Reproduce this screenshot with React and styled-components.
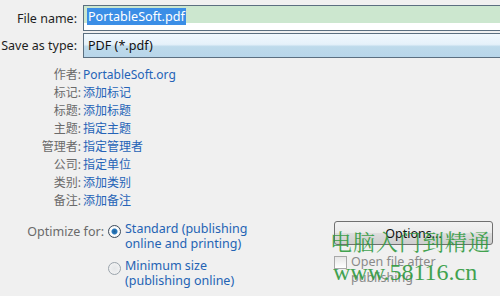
import React from "react";
import styled, { createGlobalStyle } from "styled-components";

const GlobalStyle = createGlobalStyle`
  html, body {
    margin: 0;
    padding: 0;
    background: #f0f0f0;
    overflow: hidden;
  }
  body {
    font-family: "Noto Sans", "Noto Sans CJK SC", sans-serif;
    font-size: 12px;
  }
`;

const Page = styled.div`
  position: relative;
  width: 500px;
  height: 296px;
  background: #f0f0f0;
  overflow: hidden;
`;

const FieldRow = styled.div`
  display: grid;
  grid-template-columns: 80px 1fr;
  align-items: center;
  height: 26px;
  margin-top: ${(p) => p.$top}px;
`;

const FieldLabel = styled.label`
  text-align: right;
  padding-right: 3px;
  color: #1e1e1e;
  font-size: 12.5px;
`;

const NameBox = styled.div`
  height: 22px;
  margin-left: 3px;
  border: 1px solid #5b6f80;
  border-right: none;
  background: linear-gradient(#cce7cf 0, #cce7cf 17px, #ffffff 17px);
  display: flex;
  align-items: flex-start;
  padding: 2px 0 0 3px;
`;

const Selected = styled.span`
  background: #3b8ee6;
  color: #ffffff;
  font-size: 12.6px;
  line-height: 17px;
  padding: 0 1px;
`;

const TypeBox = styled.div`
  height: 23px;
  margin-left: 3px;
  border: 1px solid #5b6f80;
  border-right: none;
  background: linear-gradient(#f1f8fd 0%, #e5f1fa 45%, #bedaeb 55%, #b8d6ea 100%);
  display: flex;
  align-items: center;
  padding-left: 4px;
  font-size: 12.6px;
  color: #111;
`;

const Meta = styled.div`
  display: flex;
  flex-direction: column;
  margin-top: 7px;
`;

const MetaRow = styled.div`
  display: grid;
  grid-template-columns: 83px auto;
  height: 18px;
  align-items: center;
`;

const MetaKey = styled.span`
  text-align: right;
  color: #6a6a6a;
  padding-right: 2px;
`;

const MetaValue = styled.span`
  color: #2563b7;
`;

const Bottom = styled.div`
  display: flex;
  margin-top: 12px;
`;

const OptimizeLabel = styled.div`
  width: 104px;
  text-align: right;
  color: #6a6a6a;
  padding-top: 2px;
  font-size: 12.5px;
`;

const RadioGroup = styled.div`
  display: flex;
  flex-direction: column;
  gap: 7px;
  margin-left: 4px;
  width: 216px;
`;

const RadioItem = styled.div`
  display: flex;
  align-items: flex-start;
  gap: 4px;
`;

const RadioDot = styled.span`
  flex: none;
  width: 11px;
  height: 11px;
  margin-top: 4px;
  border-radius: 50%;
  border: 1px solid ${(p) => (p.$on ? "#3c4a5a" : "#9aa3ab")};
  background: ${(p) =>
    p.$on
      ? "radial-gradient(circle, #1f5e96 0, #2a7bc0 2.5px, #ffffff 3.5px, #e3e7ea 100%)"
      : "radial-gradient(circle, #e4e6e8 0, #f6f6f6 100%)"};
`;

const RadioText = styled.span`
  color: #2463b4;
  font-size: 12.5px;
  line-height: 15px;
`;

const Side = styled.div`
  display: flex;
  flex-direction: column;
  margin-left: 10px;
  padding-top: 0;
`;

const OptionsButton = styled.button`
  width: 159px;
  height: 24px;
  border: 1px solid #707070;
  border-radius: 3px;
  background: linear-gradient(#f2f2f2 0%, #ebebeb 50%, #dddddd 51%, #cfcfcf 100%);
  font-family: "Noto Sans", sans-serif;
  font-size: 12.5px;
  color: #111;
  padding: 0;
`;

const CheckRow = styled.div`
  display: flex;
  align-items: flex-start;
  gap: 4px;
  margin-top: 9px;
`;

const CheckBox = styled.span`
  flex: none;
  width: 11px;
  height: 11px;
  margin-top: 2px;
  border: 1px solid #a8a8a8;
  background: linear-gradient(#e6e6e6, #ffffff);
`;

const CheckText = styled.span`
  color: #8a8a8a;
  font-size: 12.5px;
  line-height: 16px;
  width: 100px;
`;

const Watermark = styled.div`
  position: absolute;
  left: ${(p) => p.$x}px;
  top: ${(p) => p.$y}px;
  color: #2f9a3e;
  font-family: "Noto Serif CJK SC", "AR PL UKai CN", "Noto Sans CJK SC", serif;
  font-size: ${(p) => p.$size}px;
  letter-spacing: ${(p) => p.$ls}px;
  opacity: 0.9;
  white-space: nowrap;
  pointer-events: none;
`;

const WebMark = styled(Watermark)`
  font-family: "Liberation Serif", "DejaVu Serif", serif;
`;

const meta = [
  ["作者:", "PortableSoft.org"],
  ["标记:", "添加标记"],
  ["标题:", "添加标题"],
  ["主题:", "指定主题"],
  ["管理者:", "指定管理者"],
  ["公司:", "指定单位"],
  ["类别:", "添加类别"],
  ["备注:", "添加备注"],
];

export default function App() {
  return (
    <Page>
      <GlobalStyle />
      <FieldRow $top={5}>
        <FieldLabel>File name:</FieldLabel>
        <NameBox>
          <Selected>PortableSoft.pdf</Selected>
        </NameBox>
      </FieldRow>
      <FieldRow $top={1}>
        <FieldLabel>Save as type:</FieldLabel>
        <TypeBox>PDF (*.pdf)</TypeBox>
      </FieldRow>

      <Meta>
        {meta.map(([k, v]) => (
          <MetaRow key={k}>
            <MetaKey>{k}</MetaKey>
            <MetaValue>{v}</MetaValue>
          </MetaRow>
        ))}
      </Meta>

      <Bottom>
        <OptimizeLabel>Optimize for:</OptimizeLabel>
        <RadioGroup>
          <RadioItem>
            <RadioDot $on />
            <RadioText>
              Standard (publishing
              <br />
              online and printing)
            </RadioText>
          </RadioItem>
          <RadioItem>
            <RadioDot />
            <RadioText>
              Minimum size
              <br />
              (publishing online)
            </RadioText>
          </RadioItem>
        </RadioGroup>
        <Side>
          <OptionsButton>Options...</OptionsButton>
          <CheckRow>
            <CheckBox />
            <CheckText>Open file after publishing</CheckText>
          </CheckRow>
        </Side>
      </Bottom>

      <Watermark $x={330} $y={225} $size={22} $ls={1}>
        电脑入门到精通
      </Watermark>
      <WebMark $x={333} $y={259} $size={24} $ls={0}>
        www.58116.cn
      </WebMark>
    </Page>
  );
}
